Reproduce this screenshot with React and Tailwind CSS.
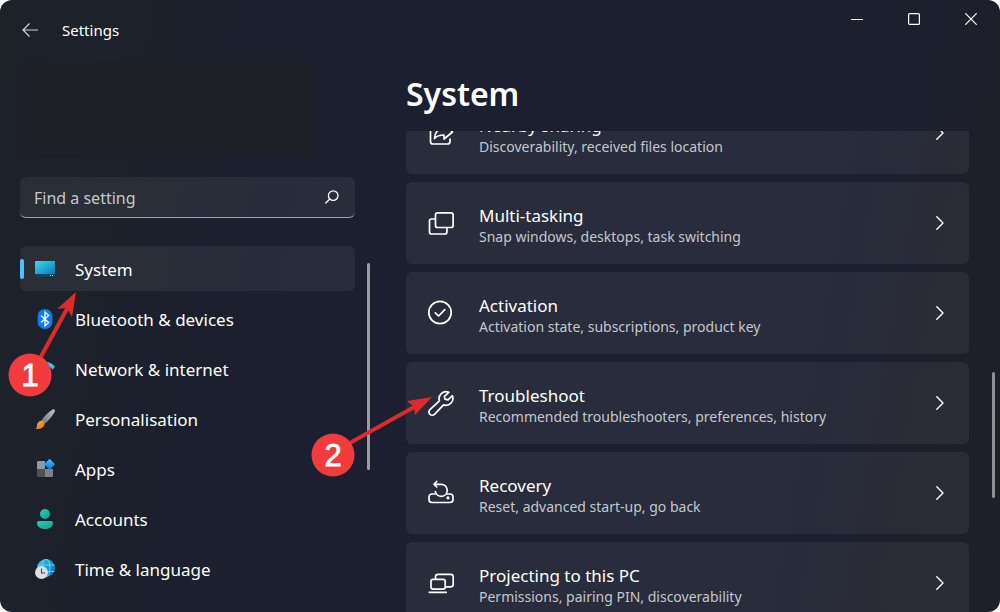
import React from 'react';

const BackIcon = () => (
  <svg width="16" height="14" viewBox="0 0 16 14" fill="none" stroke="currentColor" strokeWidth="1.2">
    <path d="M7.5 0.5L1 7l6.5 6.5M1 7h15" />
  </svg>
);

const SearchIcon = () => (
  <svg width="14" height="14" viewBox="0 0 14 14" fill="none" stroke="currentColor" strokeWidth="1.3">
    <circle cx="8.2" cy="5.6" r="4.8" />
    <path d="M4.8 9L0.8 13" strokeLinecap="round" />
  </svg>
);

const ChevronIcon = () => (
  <svg width="8" height="14" viewBox="0 0 8 14" fill="none" stroke="currentColor" strokeWidth="1.4" strokeLinecap="round" strokeLinejoin="round">
    <path d="M0.8 0.8L7 7l-6.2 6.2" />
  </svg>
);

const SystemIcon = () => (
  <svg width="20" height="16" viewBox="0 0 20 16">
    <defs>
      <linearGradient id="sys" x1="0" y1="0" x2="1" y2="1">
        <stop offset="0" stopColor="#36dfe9" />
        <stop offset="1" stopColor="#0f75c6" />
      </linearGradient>
    </defs>
    <rect width="20" height="16" rx="1" fill="#08455a" />
    <path d="M1 0h18a1 1 0 0 1 1 1v12H0V1a1 1 0 0 1 1-1z" fill="url(#sys)" />
    <path d="M15 14h1v1h-1zM17 14h1v1h-1z" fill="#b5dcea" />
  </svg>
);

const BluetoothIcon = () => (
  <svg width="20" height="20" viewBox="0 0 20 20">
    <rect x="2.6" width="14.8" height="20" rx="7.2" fill="#0a7df5" />
    <path d="M6 6.5l7.6 7L10 17V3l3.6 3.5-7.6 7" fill="none" stroke="#fff" strokeWidth="1.3" />
  </svg>
);

const NetworkIcon = () => (
  <svg width="20" height="16" viewBox="0 0 20 16" fill="none">
    <path d="M0 5.8C5.5-0.8 14.5-0.8 20 5.8l-2.4 2.6C13.5 3.6 6.5 3.6 2.4 8.4z" fill="#3cc0f3" />
    <path d="M3.5 9.5c3.6-4 9.4-4 13 0l-2.3 2.4c-2.4-2.6-6-2.6-8.4 0z" fill="#1a98df" />
    <path d="M7 13c1.7-1.8 4.3-1.8 6 0l-3 3z" fill="#0c72c4" />
  </svg>
);

const BrushIcon = () => (
  <svg width="20" height="20" viewBox="0 0 20 20">
    <defs>
      <linearGradient id="handle" x1="1" y1="0" x2="0" y2="1">
        <stop offset="0" stopColor="#c3c8ce" />
        <stop offset="1" stopColor="#6a6f76" />
      </linearGradient>
      <linearGradient id="bristle" x1="0" y1="0" x2="1" y2="1">
        <stop offset="0" stopColor="#ffc52f" />
        <stop offset="1" stopColor="#e8611a" />
      </linearGradient>
    </defs>
    <path d="M19.3 0.4c1 0.8 0.6 2.2-0.3 3.6C16.6 8 13.4 11.8 9.6 15L6.2 11.4C9.4 7.2 13.4 3.2 16.7 1c1.1-.7 2-1 2.6-.6z" fill="url(#handle)" />
    <path d="M5.6 11.9c2.2-.5 4.4 1.7 3.8 4-.7 2.8-4.6 5-9.4 3.6 2-.7 2-1.7 2.1-3.3.1-2.2 1.5-3.900 3.500-4.300z" fill="url(#bristle)" />
  </svg>
);

const AppsIcon = () => (
  <svg width="20" height="20" viewBox="0 0 20 20">
    <defs>
      <linearGradient id="diamond" x1="0" y1="0" x2="1" y2="1">
        <stop offset="0" stopColor="#3ccbf4" />
        <stop offset="1" stopColor="#0a70d8" />
      </linearGradient>
    </defs>
    <path d="M3 2h7v8H2V3a1 1 0 0 1 1-1z" fill="#9298a3" />
    <path d="M2 10h8v8H3a1 1 0 0 1-1-1z" fill="#4d5157" />
    <path d="M10 10h8v7a1 1 0 0 1-1 1h-7z" fill="#7c828b" />
    <rect x="10.7" y="1.4" width="7.8" height="7.8" rx="0.8" transform="rotate(45 14.6 5.3)" fill="url(#diamond)" />
  </svg>
);

const AccountsIcon = () => (
  <svg width="20" height="20" viewBox="0 0 20 20">
    <defs>
      <linearGradient id="person" x1="0" y1="0" x2="1" y2="1">
        <stop offset="0" stopColor="#2bcfb4" />
        <stop offset="1" stopColor="#149c8b" />
      </linearGradient>
    </defs>
    <circle cx="10" cy="5" r="5" fill="url(#person)" />
    <path d="M4 12h12a2 2 0 0 1 2 2c0 4-4 6-8 6s-8-2-8-6a2 2 0 0 1 2-2z" fill="url(#person)" />
  </svg>
);

const TimeIcon = () => (
  <svg width="20" height="20" viewBox="0 0 20 20">
    <defs>
      <linearGradient id="globe" x1="0" y1="0" x2="1" y2="1">
        <stop offset="0" stopColor="#35cfe6" />
        <stop offset="1" stopColor="#0c63bd" />
      </linearGradient>
    </defs>
    <circle cx="11" cy="9" r="9" fill="url(#globe)" />
    <g fill="none" stroke="#5ee0f3" strokeWidth="0.9">
      <ellipse cx="11" cy="9" rx="4" ry="9" />
      <path d="M3 6h16.4M3 12.5h16.4" />
    </g>
    <circle cx="6.5" cy="13.5" r="6.5" fill="#dcdee1" />
    <path d="M6.5 9.5V14H10" fill="none" stroke="#43474d" strokeWidth="1.1" />
  </svg>
);

const LineIcon = ({ children }) => (
  <svg width="28" height="28" viewBox="0 0 28 28" fill="none" stroke="currentColor" strokeWidth="1.7" strokeLinecap="round" strokeLinejoin="round" aria-hidden="true">
    {children}
  </svg>
);

const navItems = [
  { name: 'System', icon: <SystemIcon />, active: true },
  { name: 'Bluetooth & devices', icon: <BluetoothIcon /> },
  { name: 'Network & internet', icon: <NetworkIcon /> },
  { name: 'Personalisation', icon: <BrushIcon /> },
  { name: 'Apps', icon: <AppsIcon /> },
  { name: 'Accounts', icon: <AccountsIcon /> },
  { name: 'Time & language', icon: <TimeIcon /> },
];

const settings = [
  {
    title: 'Nearby sharing',
    text: 'Discoverability, received files location',
    icon: (
      <LineIcon>
        <path d="M8 7H6a2.5 2.5 0 0 0-2.5 2.5v13A2.5 2.5 0 0 0 6 25h14.5a2.5 2.5 0 0 0 2.5-2.5V20" />
        <path d="M17 5l8.5 8-8.5 7v-4c-4 0-7 .5-9.5 3.5C8 13 11.5 9.5 17 9z" />
      </LineIcon>
    ),
  },
  {
    title: 'Multi-tasking',
    text: 'Snap windows, desktops, task switching',
    icon: (
      <LineIcon>
        <rect x="8.5" y="3.9" width="17.6" height="14.6" rx="2" />
        <path d="M8 10H4.5a2 2 0 0 0-2 2v11a2 2 0 0 0 2 2h13.4a2 2 0 0 0 2-2v-4" />
      </LineIcon>
    ),
  },
  {
    title: 'Activation',
    text: 'Activation state, subscriptions, product key',
    icon: (
      <LineIcon>
        <circle cx="13" cy="13.5" r="11.2" />
        <path d="M8.3 13.8l3.3 3.2 6.2-6.4" />
      </LineIcon>
    ),
  },
  {
    title: 'Troubleshoot',
    text: 'Recommended troubleshooters, preferences, history',
    icon: (
      <LineIcon>
        <path d="M21.8 3.3a7 7 0 0 0-9.4 8.6L3 20.7a3.2 3.2 0 0 0 4.5 4.6l9-9.4a7 7 0 0 0 8.9-9.2l-4.4 4.1-3-.6-.6-2.9z" />
      </LineIcon>
    ),
  },
  {
    title: 'Recovery',
    text: 'Reset, advanced start-up, go back',
    icon: (
      <LineIcon>
        <path d="M8 15H5a3 3 0 0 0-3 3v2.5a3 3 0 0 0 3 3h18a3 3 0 0 0 3-3V18a3 3 0 0 0-3-3h-3" />
        <path d="M7 5.300h7.200a6 6 0 1 1-5.800 7.400M7 5.300l2.800-2.900M7 5.300l2.800 2.700" />
        <circle cx="21" cy="18.8" r="0.8" fill="currentColor" />
      </LineIcon>
    ),
  },
  {
    title: 'Projecting to this PC',
    text: 'Permissions, pairing PIN, discoverability',
    icon: (
      <LineIcon>
        <rect x="4" y="10.3" width="14.2" height="9.8" rx="2" />
        <path d="M8.5 9.800V7.800A2.500 2.500 0 0 1 11 5.300h12.700a2.500 2.500 0 0 1 2.500 2.500v7.500a2.500 2.500 0 0 1-2.500 2.500h-5M2.300 23.300h17" />
      </LineIcon>
    ),
  },
];

const TitleBar = () => (
  <header className="flex items-start justify-between">
    <div className="flex items-center gap-6 pl-[22px] pt-[18px]">
      <button aria-label="Back" className="text-gray-300">
        <BackIcon />
      </button>
      <span className="text-[15px] leading-6">Settings</span>
    </div>
    <div className="flex pr-px">
      <button aria-label="Minimise" className="flex h-[38px] w-[57px] items-center justify-center">
        <svg width="12" height="12" viewBox="0 0 12 12" stroke="currentColor" strokeWidth="1.2"><path d="M0 6.5h12" /></svg>
      </button>
      <button aria-label="Maximise" className="flex h-[38px] w-[57px] items-center justify-center">
        <svg width="12" height="12" viewBox="0 0 12 12" fill="none" stroke="currentColor" strokeWidth="1.2"><rect x="0.6" y="0.6" width="10.8" height="10.8" rx="1" /></svg>
      </button>
      <button aria-label="Close" className="flex h-[38px] w-[57px] items-center justify-center">
        <svg width="12" height="12" viewBox="0 0 12 12" stroke="currentColor" strokeWidth="1.2"><path d="M0.3 0.3l11.4 11.4M11.7 0.3L0.3 11.7" /></svg>
      </button>
    </div>
  </header>
);

const Sidebar = () => (
  <aside className="flex w-[370px] shrink-0 flex-col pl-5 pt-5">
    <div className="mr-[55px] h-24 shrink-0 bg-[#1d2027]" />
    <label className="mr-[15px] mt-[19px] flex h-[41px] shrink-0 items-center rounded-md border-b border-gray-400 bg-white/6 pl-3.5 pr-4">
      <input
        type="text"
        placeholder="Find a setting"
        aria-label="Find a setting"
        className="min-w-0 flex-1 bg-transparent pt-0.5 text-[16px] leading-6 outline-none placeholder:text-[#c5c7cc]"
      />
      <SearchIcon />
    </label>
    <div className="mt-7 flex min-h-0 flex-1 justify-between">
      <nav className="flex w-[335px] flex-col gap-[5px] overflow-hidden">
        {navItems.map((item) => (
          <a
            key={item.name}
            href="#"
            aria-current={item.active ? 'page' : undefined}
            className={`flex h-[45px] shrink-0 items-center rounded-md ${item.active ? 'bg-white/6' : ''}`}
          >
            <span className={`h-5 w-1 rounded-full ${item.active ? 'bg-[#4cc2ff]' : ''}`} />
            <span className="ml-[11px] flex w-5 justify-center">{item.icon}</span>
            <span className="ml-5 pt-0.5 text-[17px] leading-6">{item.name}</span>
          </a>
        ))}
      </nav>
      <div className="mt-[17px] h-[207px] w-[3px] rounded-full bg-[#9b9ca3]" />
    </div>
  </aside>
);

const SettingCard = ({ title, text, icon }) => (
  <button className="flex h-[82px] w-full shrink-0 items-center rounded-md bg-white/6 pl-[21px] pr-[25px] text-left">
    {icon}
    <span className="ml-6 flex flex-1 flex-col pt-1.5">
      <span className="text-[17px] leading-[22px]">{title}</span>
      <span className="text-[14px] leading-5 text-[#c5c7cc]">{text}</span>
    </span>
    <ChevronIcon />
  </button>
);

// numbered marker with an arrow, drawn over the window
const Step = ({ number, cx, cy, line, head }) => (
  <g>
    <path d={line} stroke="#dd2b2c" strokeWidth="4" />
    <path d={head} fill="#dd2b2c" />
    <circle cx={cx} cy={cy} r="21.5" fill="#f23b3c" />
    <text x={cx} y={cy + 11} textAnchor="middle" fill="#fff" stroke="#fff" strokeWidth="0.8" className="font-['Liberation_Sans'] text-[31px]">
      {number}
    </text>
  </g>
);

const App = () => {
  const listRef = React.useRef(null);

  React.useLayoutEffect(() => {
    listRef.current.scrollTop = 39;
  }, []);

  return (
    <div className="h-screen bg-white">
      <div className="relative flex h-full flex-col overflow-hidden rounded-xl bg-[#1b1f2f] bg-[linear-gradient(100deg,#1d2229_0%,#1b1f2f_32%,#1b1f30_75%,#1d2028_100%)] font-['Noto_Sans',sans-serif] text-white">
        <TitleBar />
        <div className="flex min-h-0 flex-1">
          <Sidebar />
          <main className="flex min-w-0 flex-1 flex-col pl-9 pt-7">
            <h1 className="shrink-0 text-[32px] font-semibold leading-12">System</h1>
            <div className="mt-[13px] flex min-h-0 flex-1 justify-between">
              <div ref={listRef} className="flex flex-1 flex-col gap-2 overflow-y-auto pb-5 [scrollbar-width:none]">
                {settings.map((item) => (
                  <SettingCard key={item.title} {...item} />
                ))}
              </div>
              <div className="ml-[23px] mr-[5px] mt-[241px] h-[126px] w-[3px] rounded-full bg-[#8f9093]" />
            </div>
          </main>
        </div>
        <svg className="pointer-events-none absolute left-0 top-0" width="440" height="500" viewBox="0 0 440 500">
          <Step number="1" cx={30} cy={375} line="M38 362L68 307" head="M76 292L57 309L67 308L72 317Z" />
          <Step number="2" cx={333} cy={455} line="M348 444L416 406" head="M432 397L407 401L414 407L415 415Z" />
        </svg>
      </div>
    </div>
  );
};

export default App;
